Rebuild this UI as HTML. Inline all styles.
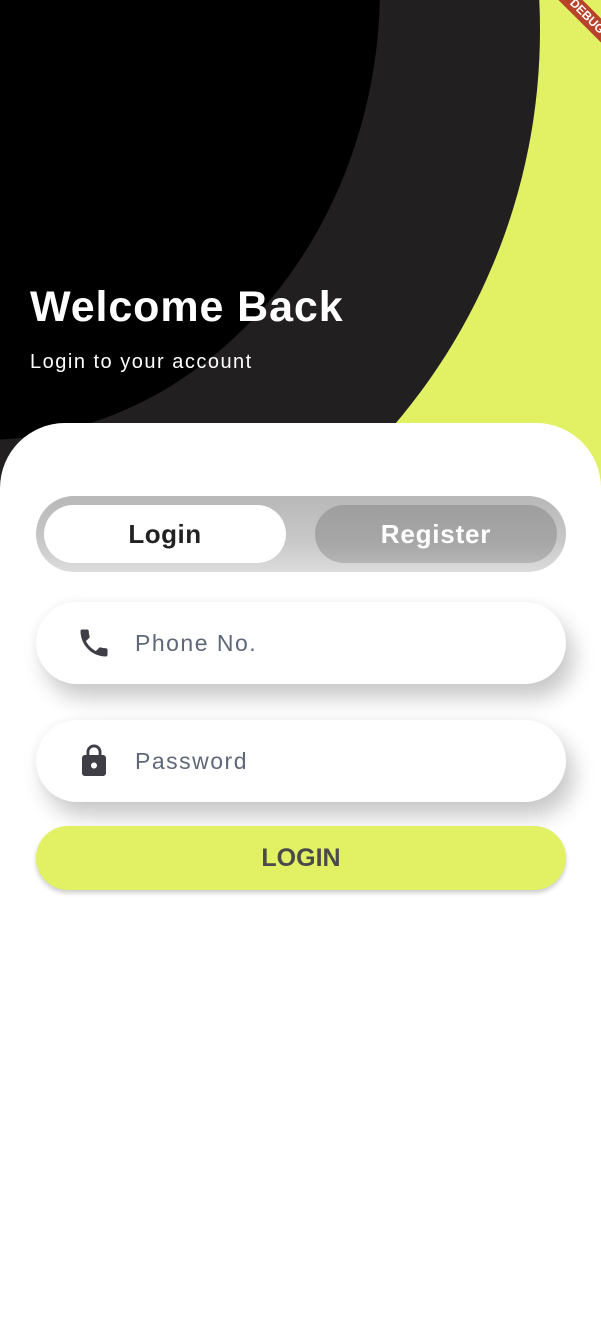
<!DOCTYPE html>
<html><head><meta charset="utf-8"><style>
*{margin:0;padding:0;box-sizing:border-box}
body{width:601px;height:1280px;overflow:hidden;background:#fff;font-family:"Liberation Sans",sans-serif;position:relative}
.top{position:absolute;left:0;top:0;width:601px;height:520px;background:#e2f063;overflow:hidden}
.dark{position:absolute;left:-676px;top:-578px;width:1216px;height:1216px;border-radius:50%;background:#211f20}
.black{position:absolute;left:-415px;top:-465px;width:795px;height:905px;border-radius:50%;background:#000}
h1{position:absolute;left:30px;top:283px;font-size:43px;font-weight:bold;color:#fff;letter-spacing:0.9px}
.sub{position:absolute;left:30px;top:351px;font-size:20px;color:#fff;letter-spacing:1.5px}
.card{position:absolute;left:0;top:423px;width:601px;height:900px;background:#fff;border-radius:65px 65px 0 0}
.tog{position:absolute;left:36px;top:496px;width:530px;height:76px;border-radius:38px;background:linear-gradient(#b8b8b8,#c8c8c8 60%,#dcdcdc)}
.p1{position:absolute;left:44px;top:505px;width:242px;height:58px;border-radius:29px;background:#fff;text-align:center;line-height:58px;font-size:26px;font-weight:bold;color:#222;letter-spacing:0.5px}
.p2{position:absolute;left:315px;top:505px;width:242px;height:58px;border-radius:29px;background:linear-gradient(#9e9e9e,#a8a8a8 70%,#b5b5b5);text-align:center;line-height:58px;font-size:26px;font-weight:bold;color:#fff;letter-spacing:0.8px}
.f{position:absolute;left:36px;width:530px;height:82px;border-radius:41px;background:#fff;box-shadow:8px 14px 22px rgba(0,0,0,0.22),-2px -2px 8px rgba(0,0,0,0.03)}
.f span{position:absolute;left:99px;top:0;line-height:82px;font-size:23px;color:#5f6878;letter-spacing:1.5px}
.f svg{position:absolute;left:40px;top:23px}
.btn{position:absolute;left:36px;top:826px;width:530px;height:64px;border-radius:32px;background:#e2f063;box-shadow:0 3px 5px rgba(0,0,0,0.2);text-align:center;line-height:64px;font-size:25px;font-weight:bold;color:#4a4a4a}
.dbg{position:absolute;width:110px;height:17px;background:#b8432a;transform:rotate(45deg);color:#fff;font-size:12px;font-weight:bold;text-align:center;line-height:17px;top:8px;left:532px}
</style></head><body>
<div class="top"><div class="dark"></div><div class="black"></div>
<h1>Welcome Back</h1><div class="sub">Login to your account</div></div>
<div class="dbg">DEBUG</div>
<div class="card"></div>
<div class="tog"></div>
<div class="p1">Login</div>
<div class="p2">Register</div>
<div class="f" style="top:602px"><svg width="36" height="36" viewBox="0 0 24 24"><path fill="#3f3d45" d="M6.62 10.79c1.44 2.830 3.76 5.14 6.59 6.59l2.2-2.2c.27-.27.67-.36 1.020-.24 1.12.37 2.33.57 3.57.57.55 0 1 .45 1 1V20c0 .55-.45 1-1 1-9.39 0-17-7.61-17-17 0-.55.45-1 1-1h3.5c.55 0 1 .45 1 1 0 1.25.2 2.45.57 3.570.11.35.03.74-.25 1.02l-2.2 2.2z"/></svg><span>Phone No.</span></div>
<div class="f" style="top:720px"><svg width="36" height="36" viewBox="0 0 24 24"><path fill="#3f3d45" d="M18 8h-1V6c0-2.76-2.24-5-5-5S7 3.24 7 6v2H6c-1.1 0-2 .9-2 2v10c0 1.1.9 2 2 2h12c1.1 0 2-.9 2-2V10c0-1.1-.9-2-2-2zm-6 9c-1.1 0-2-.9-2-2s.9-2 2-2 2 .9 2 2-.9 2-2 2zm3.1-9H8.9V6c0-1.71 1.39-3.1 3.1-3.1 1.71 0 3.1 1.39 3.1 3.1v2z"/></svg><span>Password</span></div>
<div class="btn">LOGIN</div>
</body></html>
